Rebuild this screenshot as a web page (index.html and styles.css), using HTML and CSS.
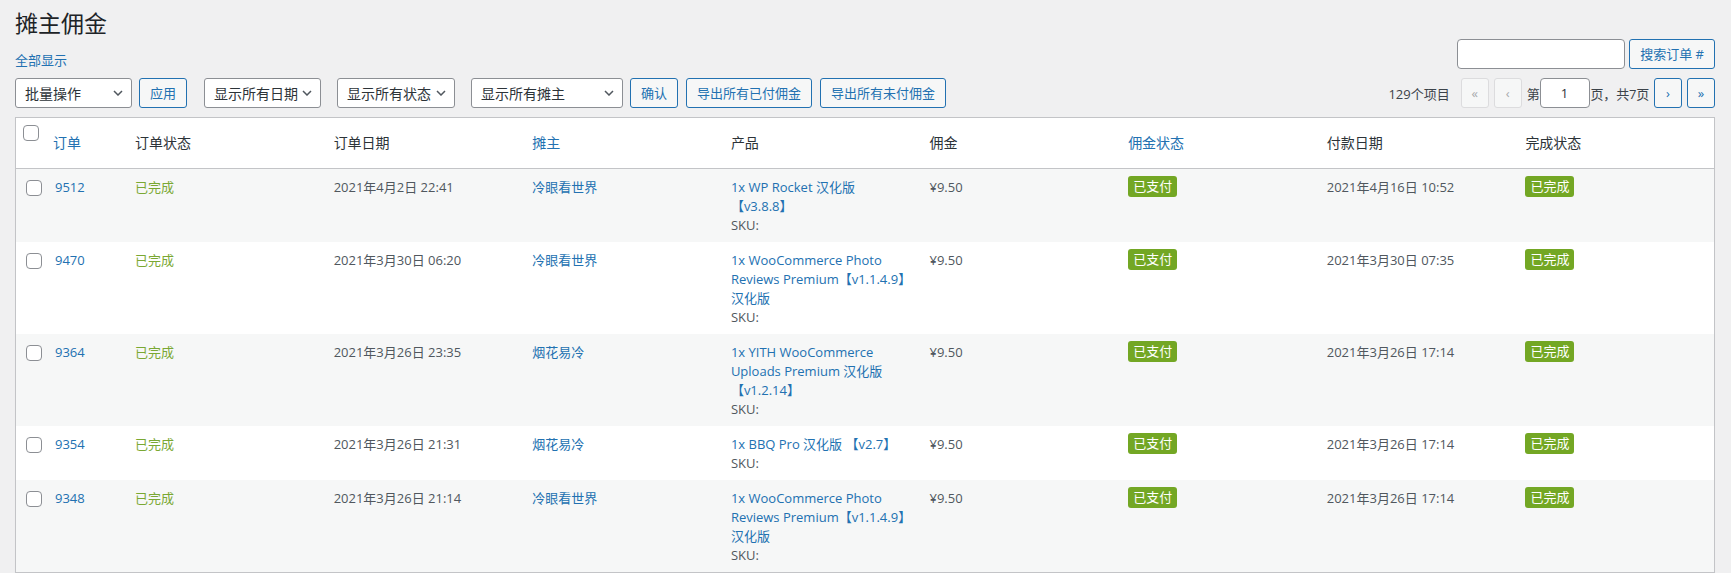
FILE: index.html
```html
<!DOCTYPE html>
<html lang="zh-CN">
<head>
  <meta charset="UTF-8">
  <title>摊主佣金</title>
  <link rel="stylesheet" href="styles.css">
</head>
<body>
  <div class="wrap">
    <h1 class="page-title">摊主佣金</h1>

    <div class="subnav">
      <a class="show-all" href="#">全部显示</a>
      <div class="search-box">
        <input type="search" class="search-input">
        <button class="button">搜索订单 #</button>
      </div>
    </div>

    <div class="tablenav">
      <div class="actions">
        <div class="bulk">
          <div class="select select-bulk"><span>批量操作</span><svg width="10" height="6" viewBox="0 0 10 6"><polyline points="1,1 5,5 9,1" fill="none" stroke="#50575e" stroke-width="1.5"/></svg></div>
          <button class="button">应用</button>
        </div>
        <div class="filters">
          <div class="select select-date"><span>显示所有日期</span><svg width="10" height="6" viewBox="0 0 10 6"><polyline points="1,1 5,5 9,1" fill="none" stroke="#50575e" stroke-width="1.5"/></svg></div>
          <div class="select select-status"><span>显示所有状态</span><svg width="10" height="6" viewBox="0 0 10 6"><polyline points="1,1 5,5 9,1" fill="none" stroke="#50575e" stroke-width="1.5"/></svg></div>
          <div class="select select-vendor"><span>显示所有摊主</span><svg width="10" height="6" viewBox="0 0 10 6"><polyline points="1,1 5,5 9,1" fill="none" stroke="#50575e" stroke-width="1.5"/></svg></div>
          <button class="button">确认</button>
          <button class="button">导出所有已付佣金</button>
          <button class="button">导出所有未付佣金</button>
        </div>
      </div>

      <div class="pagination">
        <span class="count">129个项目</span>
        <span class="page-btn disabled">«</span>
        <span class="page-btn disabled">‹</span>
        <span class="paging-input">第<input type="text" class="current-page" value="1">页，共7页</span>
        <a class="page-btn" href="#">›</a>
        <a class="page-btn" href="#">»</a>
      </div>
    </div>

    <table class="commissions">
      <colgroup>
        <col class="col-check">
        <col class="col-order">
        <col span="8">
      </colgroup>
      <thead>
        <tr>
          <th class="check"><input type="checkbox"></th>
          <th><a href="#">订单</a></th>
          <th>订单状态</th>
          <th>订单日期</th>
          <th><a href="#">摊主</a></th>
          <th>产品</th>
          <th>佣金</th>
          <th><a href="#">佣金状态</a></th>
          <th>付款日期</th>
          <th>完成状态</th>
        </tr>
      </thead>
      <tbody id="commission-rows"></tbody>
    </table>
  </div>

  <script>
    const comissoes = [
      { id: 9512, data: '2021年4月2日 22:41', vendor: '冷眼看世界', produto: '1x WP Rocket 汉化版【v3.8.8】', pago: '2021年4月16日 10:52' },
      { id: 9470, data: '2021年3月30日 06:20', vendor: '冷眼看世界', produto: '1x WooCommerce Photo Reviews Premium【v1.1.4.9】汉化版', pago: '2021年3月30日 07:35' },
      { id: 9364, data: '2021年3月26日 23:35', vendor: '烟花易冷', produto: '1x YITH WooCommerce Uploads Premium 汉化版【v1.2.14】', pago: '2021年3月26日 17:14' },
      { id: 9354, data: '2021年3月26日 21:31', vendor: '烟花易冷', produto: '1x BBQ Pro 汉化版 【v2.7】', pago: '2021年3月26日 17:14' },
      { id: 9348, data: '2021年3月26日 21:14', vendor: '冷眼看世界', produto: '1x WooCommerce Photo Reviews Premium【v1.1.4.9】汉化版', pago: '2021年3月26日 17:14' }
    ];

    const tbody = document.getElementById('commission-rows');
    comissoes.forEach(c => {
      const tr = document.createElement('tr');
      tr.innerHTML = `
        <td class="check"><input type="checkbox"></td>
        <td><a href="#">${c.id}</a></td>
        <td class="status-done">已完成</td>
        <td>${c.data}</td>
        <td><a href="#">${c.vendor}</a></td>
        <td class="product"><a href="#">${c.produto}</a><br>SKU:</td>
        <td>¥9.50</td>
        <td><span class="badge">已支付</span></td>
        <td>${c.pago}</td>
        <td><span class="badge">已完成</span></td>
      `;
      tbody.appendChild(tr);
    });
  </script>
</body>
</html>
```

FILE: styles.css
```css
body {
  margin: 0;
  background: #f0f0f1;
  font-family: 'Open Sans', 'Noto Sans CJK SC', sans-serif;
  font-size: 13px;
  color: #3c434a;
  overflow: hidden;
}

a {
  color: #2271b1;
  text-decoration: none;
}

.wrap {
  padding: 0 16px 0 15px;
}

.page-title {
  margin: 0;
  padding: 8px 0 0;
  font-size: 23px;
  font-weight: 400;
  line-height: 30px;
  color: #1d2327;
}

.subnav {
  display: flex;
  justify-content: space-between;
  align-items: flex-start;
}

.show-all {
  margin-top: 12px;
  line-height: 20px;
}

.search-box {
  display: flex;
  gap: 4px;
  margin-top: 1px;
}

.search-input {
  width: 168px;
  height: 30px;
  box-sizing: border-box;
  border: 1px solid #8c8f94;
  border-radius: 4px;
  background: #fff;
  margin: 0;
}

.button {
  height: 30px;
  box-sizing: border-box;
  margin: 0;
  padding: 0 10px;
  border: 1px solid #2271b1;
  border-radius: 3px;
  background: #f6f7f7;
  color: #2271b1;
  font-family: inherit;
  font-size: 13px;
  line-height: 28px;
  white-space: nowrap;
}

.tablenav {
  display: flex;
  justify-content: space-between;
  align-items: center;
  margin-top: 8px;
  height: 30px;
}

.actions {
  display: flex;
  gap: 17px;
}

.bulk {
  display: flex;
  gap: 7px;
}

.filters {
  display: flex;
  gap: 8px;
}

.filters .select {
  margin-right: 8px;
}

.filters .select-vendor {
  margin-right: -1px;
}

.select {
  height: 30px;
  box-sizing: border-box;
  display: flex;
  align-items: center;
  justify-content: space-between;
  padding: 0 8px 0 9px;
  border: 1px solid #8c8f94;
  border-radius: 3px;
  background: #fff;
  font-size: 14px;
  color: #2c3338;
}

.select-bulk { width: 117px; }
.select-date { width: 117px; }
.select-status { width: 118px; }
.select-vendor { width: 152px; }

.pagination {
  display: flex;
  align-items: center;
  gap: 5px;
  color: #3c434a;
}

.count {
  margin-right: 6px;
}

.page-btn {
  width: 28px;
  height: 30px;
  box-sizing: border-box;
  display: flex;
  align-items: center;
  justify-content: center;
  border: 1px solid #2271b1;
  border-radius: 3px;
  background: #f6f7f7;
  color: #2271b1;
  font-size: 13px;
}

.page-btn.disabled {
  border-color: #dcdcde;
  color: #a7aaad;
}

.paging-input {
  display: flex;
  align-items: center;
  letter-spacing: -0.2px;
}

.current-page {
  width: 50px;
  height: 30px;
  box-sizing: border-box;
  margin: 0 1px 0 0;
  border: 1px solid #8c8f94;
  border-radius: 4px;
  background: #fff;
  text-align: center;
  font-family: inherit;
  font-size: 13px;
  color: #2c3338;
}

.commissions {
  width: 100%;
  margin-top: 9px;
  table-layout: fixed;
  border-collapse: separate;
  border-spacing: 0;
  border: 1px solid #c3c4c7;
  background: #fff;
  box-shadow: 0 1px 1px rgba(0, 0, 0, 0.04);
}

.col-check { width: 29px; }
.col-order { width: 80px; }

th {
  padding: 15px 10px;
  border-bottom: 1px solid #c3c4c7;
  font-size: 14px;
  font-weight: 400;
  line-height: 20px;
  text-align: left;
  color: #2c3338;
  vertical-align: middle;
}

th:nth-child(2) {
  padding-left: 8px;
}

th.check {
  padding: 7px 0 0 7px;
  vertical-align: top;
}

td {
  padding: 9px 10px 7px;
  line-height: 19px;
  vertical-align: top;
  color: #50575e;
}

td.check {
  padding: 11px 0 0 10px;
}

tbody tr:nth-child(odd) {
  background: #f6f7f7;
}

input[type="checkbox"] {
  appearance: none;
  -webkit-appearance: none;
  display: block;
  width: 16px;
  height: 16px;
  margin: 0;
  border: 1px solid #8c8f94;
  border-radius: 4px;
  background: #fff;
}

.status-done {
  color: #7aa833;
}

.product {
  word-break: keep-all;
}

.badge {
  display: block;
  width: fit-content;
  margin-top: -2px;
  padding: 0 5px;
  border-radius: 3px;
  background: #73a724;
  color: #fff;
  line-height: 21px;
}
```
